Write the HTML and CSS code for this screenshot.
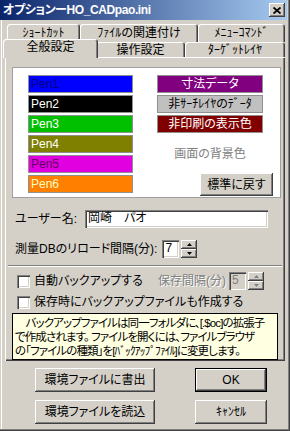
FILE: index.html
```html
<!DOCTYPE html>
<html lang="ja">
<head>
  <meta charset="UTF-8" />
  <title>オプション-HO_CADpao.ini</title>
  <link rel="stylesheet" href="styles.css">
</head>
<body>
  <div class="window">
    <div class="titlebar">
      <span class="title">オプションーHO_CADpao.ini</span>
      <span class="close">
        <svg width="8" height="7" viewBox="0 0 8 7"><path d="M0.5 0.5 L7.5 6.5 M7.5 0.5 L0.5 6.5" stroke="#000" stroke-width="1.8" fill="none"/></svg>
      </span>
    </div>

    <div class="tabs">
      <div class="tab-row back">
        <div class="tab t-shortcut">ｼｮｰﾄｶｯﾄ</div>
        <div class="tab t-assoc">ﾌｧｲﾙの関連付け</div>
        <div class="tab t-menu">ﾒﾆｭｰｺﾏﾝﾄﾞ</div>
      </div>
      <div class="tab-row front">
        <div class="tab t-general active">全般設定</div>
        <div class="tab t-operation">操作設定</div>
        <div class="tab t-target">ﾀｰｹﾞｯﾄﾚｲﾔ</div>
      </div>
    </div>

    <div class="panel">
      <div class="colors">
        <div class="pens">
          <div class="swatch pen1">Pen1</div>
          <div class="swatch pen2">Pen2</div>
          <div class="swatch pen3">Pen3</div>
          <div class="swatch pen4">Pen4</div>
          <div class="swatch pen5">Pen5</div>
          <div class="swatch pen6">Pen6</div>
        </div>
        <div class="specials">
          <div class="swatch dim">寸法データ</div>
          <div class="swatch nonsearch">非ｻｰﾁﾚｲﾔのﾃﾞｰﾀ</div>
          <div class="swatch noprint">非印刷の表示色</div>
          <div class="bg-label">画面の背景色</div>
          <button class="btn btn-reset">標準に戻す</button>
        </div>
      </div>

      <div class="field">
        <span class="label user-label">ユーザー名:</span>
        <div class="input user-input">岡崎　パオ</div>
      </div>

      <div class="field">
        <span class="label">測量DBのリロード間隔(分):</span>
        <div class="input num">7</div>
        <div class="spin">
          <span class="spin-btn"><svg width="5" height="3" viewBox="0 0 5 3"><path d="M2.5 0 L5 3 L0 3 Z" fill="#000"/></svg></span>
          <span class="spin-btn"><svg width="5" height="3" viewBox="0 0 5 3"><path d="M0 0 L5 0 L2.5 3 Z" fill="#000"/></svg></span>
        </div>
      </div>

      <div class="sep"></div>

      <div class="check-row first">
        <span class="check"></span>
        <span class="check-text">自動バックアップする</span>
        <span class="disabled interval">保存間隔(分)</span>
        <div class="input num off">5</div>
        <div class="spin off">
          <span class="spin-btn"><svg width="5" height="3" viewBox="0 0 5 3"><path d="M2.5 0 L5 3 L0 3 Z" fill="#808080"/></svg></span>
          <span class="spin-btn"><svg width="5" height="3" viewBox="0 0 5 3"><path d="M0 0 L5 0 L2.5 3 Z" fill="#808080"/></svg></span>
        </div>
      </div>

      <div class="check-row">
        <span class="check"></span>
        <span class="check-text">保存時にバックアップファイルも作成する</span>
      </div>

      <div class="note">
        　バックアップファイルは同一フォルダに、[.$oc]の拡張子<br>
        で作成されます。 ファイルを開くには、ファイルブラウザ<br>
        の「ファイルの種類」を[ﾊﾞｯｸｱｯﾌﾟﾌｧｲﾙ]に変更します。
      </div>
    </div>

    <div class="actions">
      <button class="btn">環境ファイルに書出</button>
      <button class="btn default">OK</button>
      <button class="btn">環境ファイルを読込</button>
      <button class="btn">ｷｬﾝｾﾙ</button>
    </div>
  </div>
</body>
</html>
```

FILE: styles.css
```css
* { box-sizing: border-box; }
body { margin: 0; background: #d4d0c8; color: #000; font: 12px/14px "Liberation Sans", "Noto Sans CJK JP", sans-serif; font-feature-settings: "palt"; }

/* window frame */
.window { width: 290px; height: 431px; padding: 0 3px 3px 3px; box-shadow: inset -1px -1px #404040, inset -2px -2px #808080, inset 1px 0 #d4d0c8, inset 2px 0 #fff; }
.titlebar { display: flex; align-items: center; justify-content: space-between; height: 20px; margin-left: -3px; padding: 0 2px 0 3px; background: linear-gradient(to right, #0a246a, #a6caf0); color: #fff; font-weight: bold; }
.title { letter-spacing: -0.4px; }
.close { display: flex; align-items: center; justify-content: center; width: 16px; height: 14px; background: #d4d0c8; box-shadow: inset -1px -1px #404040, inset 1px 1px #fff, inset -2px -2px #808080; }

/* tabs */
.tabs { padding-top: 4px; }
.tab-row { display: flex; }
.tab-row.back { height: 18px; padding-left: 4px; }
.tab-row.front { height: 15px; padding-left: 2px; }
.tab { display: flex; align-items: center; justify-content: center; background: #d4d0c8; border-radius: 3px 3px 0 0; box-shadow: inset 1px 1px #fff, inset -1px 0 #404040, inset -2px 0 #808080; }
.t-shortcut { width: 73px; }
.t-assoc { width: 118px; }
.t-menu { width: 87px; }
.t-general { width: 91px; }
.t-operation { width: 89px; }
.t-target { width: 100px; }
.tab.active { position: relative; z-index: 1; height: 19px; margin: -3px -2px -1px -2px; width: 95px; padding-bottom: 3px; }

/* main panel */
.panel { height: 304px; margin: 0 2px; padding: 10px 4px 0 7px; box-shadow: inset 1px 1px #fff, inset -1px -1px #404040, inset -2px -2px #808080; }

.colors { display: flex; gap: 24px; height: 131px; padding: 7px 0 0 15px; background: #fff; border: 1px solid #a0a0a0; }
.pens { display: flex; flex-direction: column; gap: 2px; width: 105px; }
.specials { display: flex; flex-direction: column; gap: 2px; width: 116px; }
.swatch { height: 18px; line-height: 16px; padding-left: 2px; border: 1px solid #909090; color: #fff; }
.specials .swatch { width: 106px; padding: 0; text-align: center; }
.pen1 { background: #0000ff; color: #000080; }
.pen2 { background: #000; }
.pen3 { background: #00c000; }
.pen4 { background: #808000; }
.pen5 { background: #e000e0; color: #600060; }
.pen6 { background: #ff8000; color: #ffffc0; }
.dim { background: #800080; }
.nonsearch { background: #c0c0c0; color: #000; }
.noprint { background: #800000; }
.bg-label { width: 106px; margin-top: 11px; line-height: 16px; text-align: center; color: #808080; }

.btn { display: flex; align-items: center; justify-content: center; border: 0; padding: 0; background: #d4d0c8; font: inherit; color: #000; box-shadow: inset -1px -1px #404040, inset 1px 1px #fff, inset -2px -2px #808080, inset 2px 2px #d4d0c8; }
.btn-reset { align-self: flex-end; width: 73px; height: 23px; margin-top: 9px; }

/* form rows */
.field { display: flex; align-items: center; height: 18px; margin-top: 12px; padding-left: 3px; }
.user-label { width: 70px; }
.input { height: 18px; line-height: 16px; padding-left: 3px; background: #fff; box-shadow: inset 1px 1px #808080, inset 2px 2px #404040, inset -1px -1px #fff, inset -2px -2px #d4d0c8; }
.user-input { width: 183px; }
.num { width: 17px; margin-left: 5px; }
.num.off { margin-left: 3px; background: #d4d0c8; color: #808080; }
.spin { display: flex; flex-direction: column; width: 16px; height: 18px; margin-left: 2px; }
.spin-btn { display: flex; align-items: center; justify-content: center; height: 9px; background: #d4d0c8; box-shadow: inset -1px -1px #404040, inset 1px 1px #fff, inset -2px -2px #808080; }

.sep { height: 2px; margin: 7px -1px 0 -4px; border-top: 1px solid #808080; border-bottom: 1px solid #fff; }

.check-row { display: flex; align-items: center; height: 18px; margin-top: 5px; padding-left: 5px; padding-right: 17px; }
.check-row + .check-row { margin-top: 3px; }
.check { width: 13px; height: 13px; background: #fff; box-shadow: inset 1px 1px #808080, inset 2px 2px #404040, inset -1px -1px #fff, inset -2px -2px #d4d0c8; }
.check-text { margin-left: 4px; }
.disabled { color: #808080; text-shadow: 1px 1px #fff; }
.interval { margin-left: auto; }

.note { height: 47px; margin: 2px 3px 0 0; padding: 2px 2px; border: 1px solid #000; background: #ffffe1; font-size: 11.5px; line-height: 14px; letter-spacing: -0.9px; white-space: nowrap; overflow: hidden; }

/* bottom buttons */
.actions { display: grid; grid-template-columns: 120px 72px; grid-auto-rows: 24px; column-gap: 40px; row-gap: 8px; margin: 7px 0 0 32px; }
.btn.default { box-shadow: inset 0 0 0 1px #000, inset -2px -2px #404040, inset 2px 2px #fff, inset -3px -3px #808080; }
```
